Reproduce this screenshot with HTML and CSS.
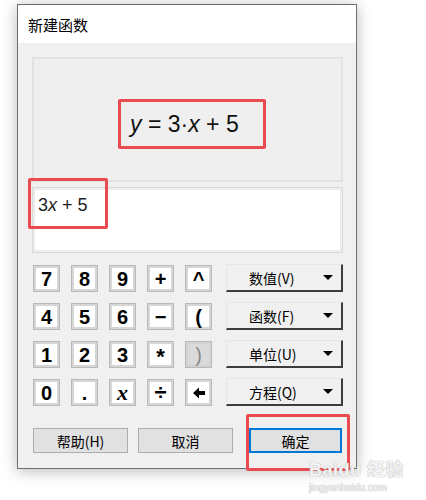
FILE: index.html
```html
<!DOCTYPE html>
<html lang="zh">
<head>
    <meta charset="UTF-8">
    <title>新建函数</title>
    <link rel="stylesheet" href="styles.css">
</head>
<body>

<div class="dialog">
    <div class="title">新建函数</div>

    <div class="content">
        <div class="preview">
            <div class="formula mark"><i>y</i>&nbsp;=&nbsp;3·<i>x</i>&nbsp;+&nbsp;5</div>
        </div>

        <div class="input">
            <span class="expr">3<i>x</i> + 5</span>
            <div class="input-mark"></div>
        </div>

        <div class="pad">
            <div class="keys">
                <div class="key">7</div>
                <div class="key">8</div>
                <div class="key">9</div>
                <div class="key">+</div>
                <div class="key">^</div>
                <div class="key">4</div>
                <div class="key">5</div>
                <div class="key">6</div>
                <div class="key">−</div>
                <div class="key">(</div>
                <div class="key">1</div>
                <div class="key">2</div>
                <div class="key">3</div>
                <div class="key star">*</div>
                <div class="key off">)</div>
                <div class="key">0</div>
                <div class="key">.</div>
                <div class="key var">x</div>
                <div class="key div">÷</div>
                <div class="key">
                    <svg width="14" height="12" viewBox="0 0 14 12"><path d="M1 6 L7 0.5 V4 H13 V8 H7 V11.5 Z" fill="#000"/></svg>
                </div>
            </div>

            <div class="menus">
                <div class="menu"><span>数值(V)</span><b class="caret"></b></div>
                <div class="menu"><span>函数(F)</span><b class="caret"></b></div>
                <div class="menu"><span>单位(U)</span><b class="caret"></b></div>
                <div class="menu"><span>方程(Q)</span><b class="caret"></b></div>
            </div>
        </div>

        <div class="actions">
            <div class="btn">帮助(H)</div>
            <div class="btn">取消</div>
            <div class="btn ok">确定<div class="ok-mark"></div></div>
        </div>
    </div>
</div>

<div class="watermark">
    <div class="wm-logo">Bai<span class="paw">du</span> 经验</div>
    <div class="wm-url">jingyanbaidu.com</div>
</div>

</body>
</html>
```

FILE: styles.css
```css
body {
    margin: 0;
    padding: 4px 0 0 17px;
    background: #ffffff;
    font-family: "Liberation Sans", "Noto Sans CJK SC", sans-serif;
    color: #000;
    position: relative;
    height: 496px;
    overflow: hidden;
}

.dialog {
    width: 340px;
    height: 465px;
    box-sizing: border-box;
    border: 1px solid #6e6e6e;
    background: #f0f0f0;
    box-shadow: 0 2px 14px rgba(0, 0, 0, 0.28);
}

.title {
    height: 38px;
    background: #ffffff;
    padding-left: 10px;
    display: flex;
    align-items: center;
    font-family: "Noto Sans CJK SC", sans-serif;
    font-size: 15px;
}

.content {
    padding: 14px 13px 0 14px;
}

.preview {
    height: 125px;
    box-sizing: border-box;
    border: 2px solid #e2e2e2;
    background: #efefef;
    display: flex;
    align-items: center;
    justify-content: center;
    padding: 9px 0 0 9px;
}

.formula {
    width: 148px;
    height: 50px;
    box-sizing: border-box;
    border: 3px solid #e94b50;
    border-radius: 2px;
    padding-left: 9px;
    display: flex;
    align-items: center;
    font-size: 23px;
    color: #111;
}

.input {
    position: relative;
    margin-top: 5px;
    height: 66px;
    box-sizing: border-box;
    border: 1px solid #dadada;
    box-shadow: inset 0 0 0 2px #ececec;
    background: #ffffff;
    padding: 7px 0 0 5px;
}

.expr {
    font-size: 18px;
    color: #222;
}

.input-mark {
    position: absolute;
    left: -5px;
    top: -10px;
    width: 80px;
    height: 51px;
    box-sizing: border-box;
    border: 3px solid #e94b50;
    border-radius: 2px;
}

.pad {
    display: flex;
    margin-top: 11px;
}

.keys {
    margin: 1px 0 0 1px;
    display: grid;
    grid-template-columns: repeat(5, 27px);
    grid-auto-rows: 27px;
    gap: 11px;
}

.key {
    box-sizing: border-box;
    border: 1px solid #b9b9b9;
    background: #ffffff;
    box-shadow: inset 0 0 0 2px #d6d6d6;
    display: flex;
    align-items: center;
    justify-content: center;
    font-weight: bold;
    font-size: 20px;
    line-height: 1;
}

.key.star {
    align-items: flex-start;
    padding-top: 4px;
    font-size: 22px;
}

.key.div {
    font-size: 22px;
}

.key.var {
    font-family: "Liberation Serif", serif;
    font-style: italic;
    font-size: 22px;
}

.key.off {
    background: #dadada;
    box-shadow: inset 0 0 0 2px #d2d2d2;
    color: #8a8a8a;
    font-weight: normal;
}

.menus {
    margin-left: 14px;
    display: flex;
    flex-direction: column;
    gap: 10px;
}

.menu {
    width: 117px;
    height: 28px;
    box-sizing: border-box;
    border-top: 1px solid #e6e6e6;
    border-left: 1px solid #e6e6e6;
    border-right: 2px solid #3c3c3c;
    border-bottom: 2px solid #3c3c3c;
    background: #f0f0f0;
    display: flex;
    align-items: center;
    padding: 0 8px 0 22px;
    font-family: "Noto Sans CJK SC", sans-serif;
    font-size: 14px;
}

.caret {
    margin-left: auto;
    width: 0;
    height: 0;
    border-left: 5px solid transparent;
    border-right: 5px solid transparent;
    border-top: 5px solid #000;
}

.actions {
    display: flex;
    margin: 22px 0 0 1px;
}

.btn {
    position: relative;
    width: 95px;
    height: 25px;
    box-sizing: border-box;
    border: 1px solid #adadad;
    background: #e1e1e1;
    display: flex;
    align-items: center;
    justify-content: center;
    font-family: "Noto Sans CJK SC", sans-serif;
    font-size: 14px;
}

.btn + .btn {
    margin-left: 10px;
}

.btn.ok {
    width: 93px;
    margin-left: 16px;
    border: 2px solid #0078d7;
}

.ok-mark {
    position: absolute;
    left: -5px;
    top: -16px;
    width: 104px;
    height: 57px;
    box-sizing: border-box;
    border: 3px solid #e94b50;
    border-radius: 2px;
}

.watermark {
    position: absolute;
    left: 309px;
    top: 455px;
    color: rgba(255, 255, 255, 0.85);
    text-shadow: 0 0 1px #b5b5b5, 0 0 1px #b5b5b5;
}

.wm-logo {
    font-family: "Liberation Sans", "Noto Sans CJK SC", sans-serif;
    font-weight: bold;
    font-size: 18px;
    letter-spacing: 0.5px;
}

.wm-url {
    font-size: 10px;
    margin-top: 1px;
}
```
